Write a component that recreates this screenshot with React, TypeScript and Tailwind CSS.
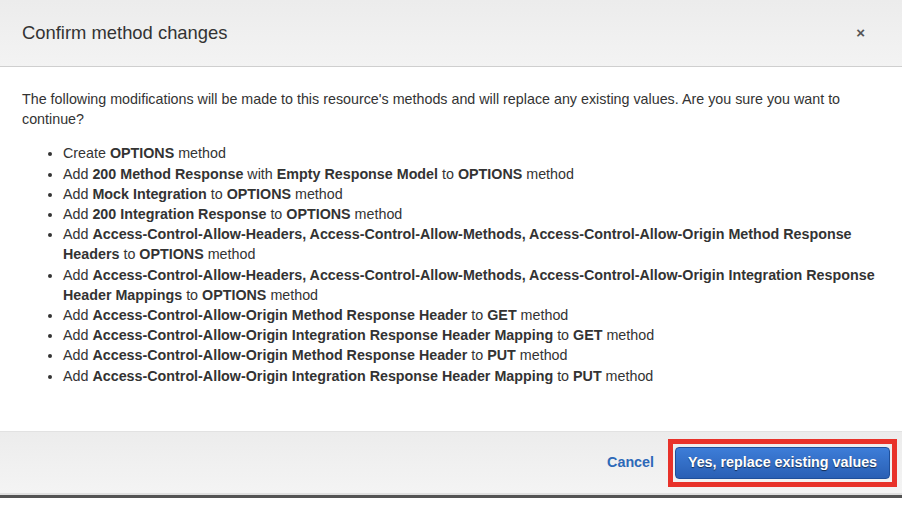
import React from 'react';

const B: React.FC<{ children: React.ReactNode }> = ({ children }) => (
  <b className="font-bold">{children}</b>
);

const items: React.ReactNode[] = [
  <>Create <B>OPTIONS</B> method</>,
  <>Add <B>200 Method Response</B> with <B>Empty Response Model</B> to <B>OPTIONS</B> method</>,
  <>Add <B>Mock Integration</B> to <B>OPTIONS</B> method</>,
  <>Add <B>200 Integration Response</B> to <B>OPTIONS</B> method</>,
  <>
    Add <B>Access-Control-Allow-Headers, Access-Control-Allow-Methods, Access-Control-Allow-Origin Method Response Headers</B> to{' '}
    <B>OPTIONS</B> method
  </>,
  <>
    Add <B>Access-Control-Allow-Headers, Access-Control-Allow-Methods, Access-Control-Allow-Origin Integration Response Header Mappings</B> to{' '}
    <B>OPTIONS</B> method
  </>,
  <>Add <B>Access-Control-Allow-Origin Method Response Header</B> to <B>GET</B> method</>,
  <>Add <B>Access-Control-Allow-Origin Integration Response Header Mapping</B> to <B>GET</B> method</>,
  <>Add <B>Access-Control-Allow-Origin Method Response Header</B> to <B>PUT</B> method</>,
  <>Add <B>Access-Control-Allow-Origin Integration Response Header Mapping</B> to <B>PUT</B> method</>,
];

export default function App() {
  return (
    <div className="w-[902px] h-[526px] bg-white font-['Liberation_Sans',Arial,sans-serif] text-[#333]">
      {/* Header */}
      <div className="h-[67px] flex items-center justify-between pl-[22px] pr-[37px] bg-gradient-to-b from-[#ececec] to-[#f3f3f3] border-b border-[#cfcfcf]">
        <h1 className="text-[18.4px] text-[#333] font-normal">Confirm method changes</h1>
        <span className="text-[15px] font-bold text-[#555] leading-none -mt-[2px]">×</span>
      </div>

      {/* Body */}
      <div className="h-[364px] pl-[22px] pr-[20px] pt-[22px] text-[14.3px] leading-[20.2px]">
        <p>
          The following modifications will be made to this resource's methods and will replace any existing values. Are you sure you want to
          continue?
        </p>
        <ul className="mt-[14px] pl-[41px] list-disc">
          {items.map((item, i) => (
            <li key={i}>{item}</li>
          ))}
        </ul>
      </div>

      {/* Footer */}
      <div className="h-[62px] flex items-center justify-end gap-[14px] pr-[5px] bg-gradient-to-b from-[#ececec] to-[#f4f4f4] border-t border-[#e2e2e2]">
        <button className="text-[14.3px] font-bold text-[#2d69b8]">Cancel</button>
        <div className="border-[5px] border-[#e8322a] px-[2px] py-[3px]">
          <button className="h-[32px] w-[215px] rounded-[4px] border border-[#1f4f9a] bg-gradient-to-b from-[#3d7dd8] to-[#2a60b5] text-white text-[14.3px] font-bold [text-shadow:0_1px_1px_rgba(0,0,0,0.6)]">
            Yes, replace existing values
          </button>
        </div>
      </div>
      <div className="h-[2px] bg-[#e0e0e0]" />
      <div className="h-[3px] bg-[#545454]" />
    </div>
  );
}
